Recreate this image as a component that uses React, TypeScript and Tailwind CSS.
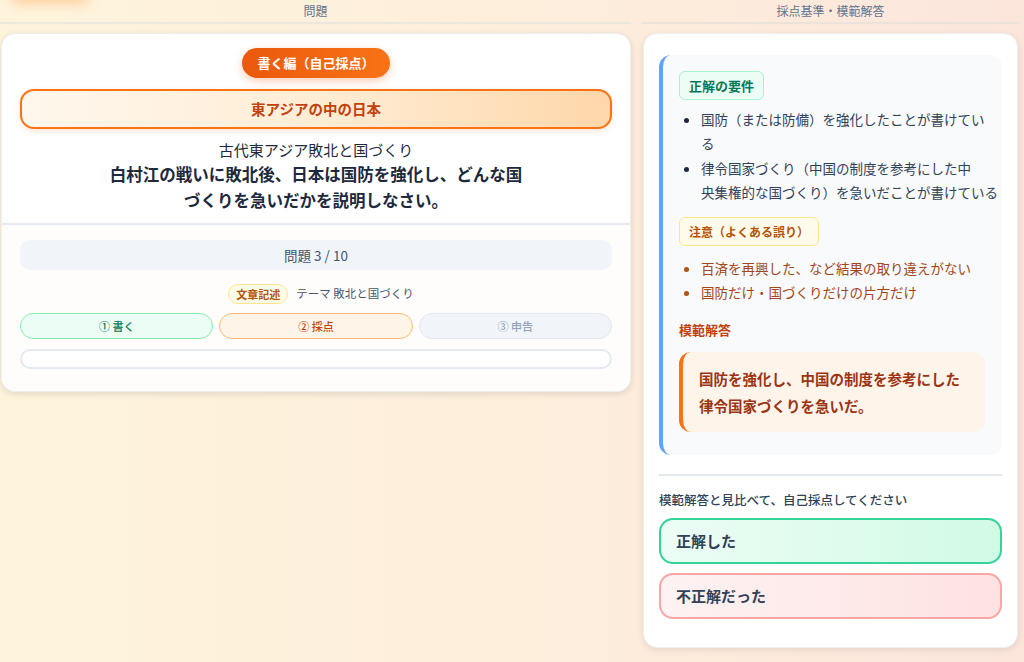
import React from "react";

const steps = [
  { label: "① 書く", cls: "bg-[#ecfdf5] border-[#86efac] text-[#047857]" },
  { label: "② 採点", cls: "bg-[#fff4e8] border-[#fdba74] text-[#c2410c]" },
  { label: "③ 申告", cls: "bg-[#f1f5f9] border-[#e2e8f0] text-[#94a3b8]" },
];

// line breaks follow the reference layout
const requirements = [
  ["国防（または防備）を強化したことが書けてい", "る"],
  ["律令国家づくり（中国の制度を参考にした中", "央集権的な国づくり）を急いだことが書けている"],
];

const mistakes = [
  "百済を再興した、など結果の取り違えがない",
  "国防だけ・国づくりだけの片方だけ",
];

export default function App() {
  return (
    <div className="relative w-[1024px] h-[662px] overflow-hidden bg-gradient-to-r from-[#fef4dc] via-[#fdeedc] to-[#fce6dc] font-['Noto_Sans_CJK_JP','Noto_Sans',sans-serif] text-slate-800">
      {/* decorative blob peeking in at the top */}
      <div className="absolute -top-[14px] left-[10px] w-[80px] h-[18px] rounded-full bg-[#fdba74] opacity-60 blur-[6px]" />

      <div className="relative flex gap-[10px]">
        {/* Question column */}
        <div className="w-[631px] flex flex-col">
          <div className="h-[24px] border-b-2 border-[#ebe7dd] text-center text-[12px] leading-[22px] text-slate-500">問題</div>

          <div className="mt-[9px] ml-px rounded-[14px] border border-[#eceef2] bg-white shadow-[0_2px_6px_rgba(15,23,42,0.12)] overflow-hidden">
            {/* top */}
            <div className="px-[18px] pt-[14px] pb-[10px] flex flex-col items-center border-b-2 border-[#e5e9f0]">
              <div className="h-[30px] px-[15px] flex items-center rounded-full bg-gradient-to-r from-[#ea580c] to-[#f97316] text-white text-[13px] font-bold shadow-[0_3px_8px_rgba(234,88,12,0.3)]">
                書く編（自己採点）
              </div>
              <div className="mt-[11px] w-full h-[40px] flex items-center justify-center rounded-[14px] border-2 border-[#f97316] bg-gradient-to-r from-[#fff7ed] via-[#ffedd5] to-[#fed7aa] text-[14.5px] font-bold text-[#c2410c] shadow-[0_2px_6px_rgba(249,115,22,0.18)]">
                東アジアの中の日本
              </div>
              <div className="mt-[9px] text-[15px] leading-[23px] text-slate-800">古代東アジア敗北と国づくり</div>
              <div className="max-w-[430px] text-center text-[16.5px] leading-[26px] font-bold text-slate-800">
                白村江の戦いに敗北後、日本は国防を強化し、どんな国<br />づくりを急いだかを説明しなさい。
              </div>
            </div>

            {/* bottom */}
            <div className="px-[18px] pt-[15px] pb-[22px] bg-[#fffdfb] flex flex-col">
              <div className="h-[30px] flex items-center justify-center rounded-[10px] bg-[#f1f4f9] text-[13.5px] text-slate-600">
                問題 3 / 10
              </div>
              <div className="mt-[14px] h-[20px] flex items-center justify-center gap-[8px] pl-[10px]">
                <span className="h-[20px] px-[7px] flex items-center rounded-full border border-[#fde68a] bg-[#fefce8] text-[11px] font-bold text-[#b45309]">文章記述</span>
                <span className="text-[11.5px] text-slate-600">テーマ 敗北と国づくり</span>
              </div>
              <div className="mt-[9px] grid grid-cols-3 gap-[6px]">
                {steps.map((s) => (
                  <div key={s.label} className={`h-[26px] flex items-center justify-center rounded-full border text-[11px] font-medium ${s.cls}`}>
                    {s.label}
                  </div>
                ))}
              </div>
              <div className="mt-[10px] h-[20px] rounded-full border-2 border-[#e5e9f0] bg-white" />
            </div>
          </div>
        </div>

        {/* Scoring column */}
        <div className="w-[379px] flex flex-col">
          <div className="h-[24px] border-b-2 border-[#ebe2da] text-center text-[12px] leading-[22px] text-slate-500">採点基準・模範解答</div>

          <div className="mt-[9px] mx-[2px] rounded-[14px] border border-[#eceef2] bg-white shadow-[0_2px_6px_rgba(15,23,42,0.1)] px-[15px] pt-[21px] pb-[28px]">
            <div className="rounded-[12px] border-l-4 border-[#60a5fa] bg-[#f8fafc] pl-[16px] pr-[10px] pt-[16px] pb-[23px]">
              <div className="inline-flex h-[29px] items-center px-[9px] rounded-[6px] border border-[#a7f3d0] bg-[#ecfdf5] text-[13px] font-bold text-[#047857]">
                正解の要件
              </div>
              <ul className="mt-[7px] pl-[22px] list-disc marker:text-slate-800 text-[13.5px] leading-[24px] text-slate-700 space-y-[1px] whitespace-nowrap">
                {requirements.map((r) => (
                  <li key={r[0]}>
                    {r[0]}
                    <br />
                    {r[1]}
                  </li>
                ))}
              </ul>

              <div className="mt-[13px] inline-flex h-[29px] items-center px-[9px] rounded-[6px] border border-[#fde68a] bg-[#fffbeb] text-[12px] font-bold text-[#b45309]">
                注意（よくある誤り）
              </div>
              <ul className="mt-[10px] pl-[22px] list-disc marker:text-[#b45309] text-[13.5px] leading-[24px] text-[#a1471a] whitespace-nowrap">
                {mistakes.map((m) => (
                  <li key={m}>{m}</li>
                ))}
              </ul>

              <div className="mt-[16px] text-[13px] leading-[20px] font-bold text-[#c2410c]">模範解答</div>
              <div className="mt-[12px] mr-[7px] rounded-[12px] border-l-4 border-[#f97316] bg-[#fff4ea] pl-[16px] pr-[10px] py-[13px] text-[14.5px] leading-[27px] font-bold text-[#9a3412]">
                国防を強化し、中国の制度を参考にした<br />律令国家づくりを急いだ。
              </div>
            </div>

            <div className="mt-[19px] h-[2px] bg-[#e2e8f0]" />

            <div className="mt-[15px] text-[12.5px] leading-[18px] font-medium text-slate-700">
              模範解答と見比べて、自己採点してください
            </div>
            <button className="mt-[9px] w-full h-[46px] flex items-center px-[15px] rounded-[14px] border-2 border-[#34d399] bg-gradient-to-r from-[#ecfdf5] to-[#d1fae5] text-[15px] font-bold text-slate-700">
              正解した
            </button>
            <button className="mt-[9px] w-full h-[46px] flex items-center px-[15px] rounded-[14px] border-2 border-[#fca5a5] bg-gradient-to-r from-[#fef2f2] to-[#fee2e2] text-[15px] font-bold text-slate-700">
              不正解だった
            </button>
          </div>
        </div>
      </div>
    </div>
  );
}
